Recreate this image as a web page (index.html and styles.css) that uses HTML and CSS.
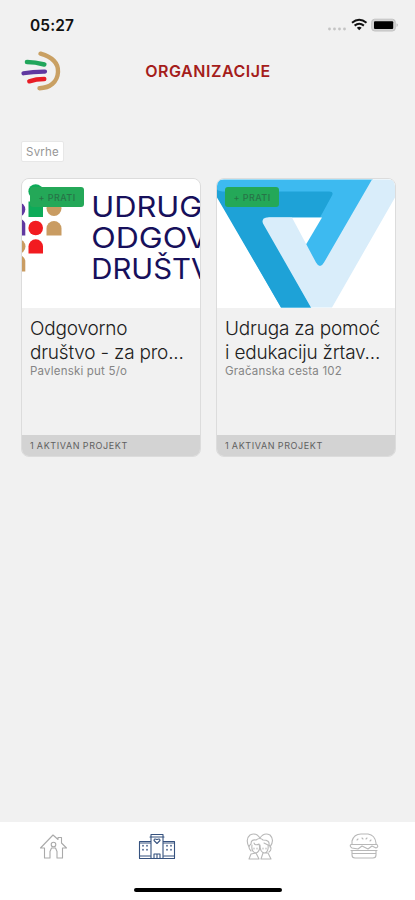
FILE: index.html
```html
<!DOCTYPE html>
<html lang="hr">
<head>
<meta charset="utf-8">
<title>Organizacije</title>
<link rel="stylesheet" href="styles.css">
</head>
<body>
<div class="screen">
  <div class="status">
    <span class="time">05:27</span>
    <svg class="indicators" width="72" height="16" viewBox="0 0 72 16">
      <g fill="#c4c4c4"><circle cx="2.5" cy="12" r="1.4"/><circle cx="7.5" cy="12" r="1.4"/><circle cx="12.5" cy="12" r="1.4"/><circle cx="17.5" cy="12" r="1.4"/></g>
      <g fill="none" stroke="#111" stroke-width="2"><path d="M25 5.8Q32.200 -.2 39.500 5.800"/><path d="M27.600 8.600Q32.200 5 36.900 8.600"/></g>
      <path d="M29.800 10.700Q32.200 9 34.700 10.700L32.200 13.300Z" fill="#111"/>
      <rect x="44.700" y="2.200" width="23.600" height="11.800" rx="3" fill="#d2d2d2" stroke="#c2c2c2"/>
      <rect x="47" y="4.300" width="19.200" height="7.600" rx="1" fill="#000"/>
      <path d="M69.700 6.300Q71.600 8 69.700 10Z" fill="#aaa"/>
    </svg>
  </div>
  <header class="header">
    <svg class="logo" width="42" height="42" viewBox="0 0 42 42" fill="none" stroke-linecap="round">
      <path d="M20.500 3.700C32 7 38.500 13 38 22C37.500 32 30 38 19.500 38.200" stroke="#c9a063" stroke-width="4.400"/>
      <path d="M7 12Q15 12 24.300 14.500" stroke="#21a65b" stroke-width="4.600"/>
      <path d="M3.500 23.300Q13 21.500 25 21.600" stroke="#6038a0" stroke-width="4.200"/>
      <path d="M9.300 31.300Q16 29 24.300 29" stroke="#e81c24" stroke-width="4.400"/>
    </svg>
    <h1 class="title">ORGANIZACIJE</h1>
  </header>
  <main class="content">
    <button class="filter">Svrhe</button>
    <div class="cards">
      <article class="card">
        <div class="cover">
          <svg class="art" viewBox="0 0 178 128">
            <g fill="#c99c62"><circle cx="32" cy="29" r="7.500"/><path d="M24.500 56V49a7.500 7.500 0 0 1 15 0V56Z"/><circle cx="-4" cy="67" r="7.500"/><path d="M-11 92V84a7.200 7.200 0 0 1 14.300-3V92Z"/></g>
            <g fill="#6038a0"><circle cx="-4" cy="30" r="7.300"/><path d="M-11 56V49a7.200 7.200 0 0 1 14.300-5V56Z"/></g>
            <g fill="#0eab59"><circle cx="13.700" cy="12" r="7.300"/><rect x="6.500" y="22" width="14.500" height="15.500"/></g>
            <g fill="#f21b20"><circle cx="13.700" cy="48.500" r="7.300"/><path d="M6.500 74V67a7.250 7.250 0 0 1 14.500 0V74Z"/></g>
            <g class="wordmark"><text x="69.200" y="37" textLength="111" lengthAdjust="spacingAndGlyphs">UDRUG</text><text x="69.200" y="68" textLength="117" lengthAdjust="spacingAndGlyphs">ODGOV</text><text x="69.200" y="99" textLength="120" lengthAdjust="spacingAndGlyphs">DRUŠTV</text></g>
          </svg>
          <span class="follow">+ PRATI</span>
        </div>
        <div class="info"><h2>Odgovorno<br>društvo - za pro...</h2><p>Pavlenski put 5/o</p></div>
        <div class="projects">1 AKTIVAN PROJEKT</div>
      </article>
      <article class="card">
        <div class="cover">
          <svg class="art" viewBox="0 0 178 128">
            <path d="M0 0H156L94 128H64L0 16Z" fill="#3dbaf0"/>
            <path d="M0 10Q2 12 8 12H112Q117 12 115 16L103 38H50Q44 38 47 43L94 128H64L0 18Z" fill="#1ea2d7"/>
            <path d="M51 38H105L89 65Z" fill="#fff"/>
            <path d="M50 38H75L99 83Q103 90 107 83L155 0H178V18L115 128H94L46 44Q44 39 50 38Z" fill="#d9edfa"/>
          </svg>
          <span class="follow">+ PRATI</span>
        </div>
        <div class="info"><h2>Udruga za pomoć<br>i edukaciju žrtav...</h2><p>Gračanska cesta 102</p></div>
        <div class="projects">1 AKTIVAN PROJEKT</div>
      </article>
    </div>
  </main>
  <nav class="tabs">
    <div class="tab-row">
      <svg class="tab" viewBox="0 0 38 30">
        <path d="M15 27H9.500V17H5.500L18 4L23 8.500V6.500H26.500V12L31.500 17H27.500V27H22V20.500L20.500 17H16.500L15 20.500Z"/>
        <circle cx="18.500" cy="13.500" r="2.300"/>
      </svg>
      <svg class="tab active" viewBox="0 0 38 30">
        <path d="M13 10.500H1.500V27.500H36.500V10.500H25M13 27.500V3.500H25V27.500M12 6H26M16 27V23H22V27M19 23V27M2 25H12M26 25H36M2 12H12M26 12H36M19 12.500L16 9.500Q16 7 19 8.500Q22 7 22 9.500Z"/>
        <path class="windows" d="M5 14.500V19M9 14.500V19M29 14.500V19M33 14.500V19"/>
      </svg>
      <svg class="tab pale" viewBox="0 0 38 30">
        <path d="M8 16Q4 8 9 4Q15 1 19 7Q23 1 29 4Q34 9 29 16M10 20Q6 16 10 13Q10 8 15 9Q19 6 22 9Q29 9 28 14Q32 18 28 21M11 14Q10 21 15 22Q20 20 18 13Q14 15 13 12M19 14Q19 22 24 22Q28 20 27 14L23 12M8 28L10 23L15 22L18 28M20 28L22 22L27 22L30 28M8 28H18M20 28H30M13 17V18M16 17V18M22 17V18M25 17V18"/>
      </svg>
      <svg class="tab pale" viewBox="-1 0 38 30">
        <path d="M7 13V10Q9 3 16 3H23Q30 4 31 12V13M7 20V24Q7 27 10 27H28Q31 27 31 24V20M7 22.500H31M6 13.500H32Q34 16 31 17L27 15L23 18L17 15L13 18L7 17Q4 15 6 13.500M6 19.500H32M12 9L13 8M17 7L18 8M21 8L22 7M25 10L26 9"/>
      </svg>
    </div>
    <div class="home-indicator"></div>
  </nav>
</div>
</body>
</html>
```
FILE: styles.css
```css
* { box-sizing: border-box; }
body { margin: 0; background: #f1f1f1; font-family: Inter, sans-serif; }
h1, h2, p { margin: 0; font-weight: 400; }
.screen { display: flex; flex-direction: column; width: 415px; height: 900px; overflow: hidden; }
.status { display: flex; justify-content: space-between; height: 44px; padding: 16px 16px 0 30px; }
.time { font-size: 15.5px; line-height: 20px; font-weight: 600; letter-spacing: .1px; color: #111; }
.indicators { margin-top: 1px; }
.header { display: grid; grid-template-columns: 42px 1fr 42px; align-items: center; height: 54px; padding: 0 19px 0 20px; }
.title { text-align: center; font-size: 16px; line-height: 20px; font-weight: 600; letter-spacing: .55px; color: #a51d1b; }
.content { flex: 1; padding: 43px 19px 0 21px; }
.filter { display: block; width: 43px; height: 21px; padding: 0; border: 1px solid #e7e7e7; border-radius: 2px; background: #fff; color: #969696; font: 11.5px/18px Inter, sans-serif; letter-spacing: .2px; }
.cards { display: grid; grid-template-columns: 180px 180px; gap: 15px; margin-top: 16px; }
.card { display: flex; flex-direction: column; height: 279px; border: 1px solid #dcdcdc; border-radius: 8px; overflow: hidden; }
.cover { position: relative; flex: none; height: 129px; background: #fff; }
.art { display: block; width: 178px; height: 129px; }
.wordmark { font-family: Inter, sans-serif; font-size: 28px; fill: #17105b; }
.follow { position: absolute; left: 8px; top: 8px; width: 54px; height: 20px; border-radius: 3px; background: #24a858; color: #277447; font-size: 9px; line-height: 21px; font-weight: 500; letter-spacing: .45px; text-align: center; }
.info { flex: 1; padding: 9px 0 0 8px; white-space: nowrap; }
.info h2 { font-size: 19px; line-height: 24px; font-weight: 300; letter-spacing: -.2px; color: #202020; }
.info p { margin-top: -1px; font-size: 11.5px; line-height: 14px; letter-spacing: .2px; color: #858585; }
.projects { height: 21px; padding-left: 8px; background: #d3d3d3; color: #606060; font-size: 9px; line-height: 22px; letter-spacing: .62px; word-spacing: -.6px; }
.tabs { display: flex; flex-direction: column; align-items: center; justify-content: space-between; height: 78px; padding: 9px 0 8px; background: #fff; }
.tab-row { display: grid; grid-template-columns: repeat(4, 1fr); justify-items: center; width: 415px; padding-left: 2px; }
.tab { width: 38px; height: 30px; fill: none; stroke: #aaa; stroke-width: 1.1; stroke-linejoin: round; stroke-linecap: round; }
.pale { stroke: #b8b8b8; }
.active { stroke: #36527f; }
.windows { stroke-width: 1.5; stroke-dasharray: .5 3.5; }
.home-indicator { width: 148px; height: 4px; border-radius: 2px; background: #000; }
```
